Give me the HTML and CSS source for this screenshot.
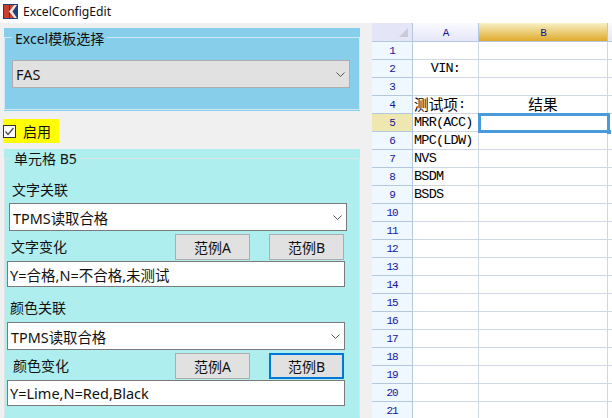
FILE: index.html
```html
<!DOCTYPE html>
<html>
<head>
	<meta charset="UTF-8">
	<title>ExcelConfigEdit</title>
	<link rel="stylesheet" href="styles.css">
</head>
<body>
	<div class="titlebar">
		<svg class="logo" width="15" height="15" viewBox="0 0 15 15">
			<rect width="15" height="15" fill="#1f3f80"/>
			<rect x="1" y="1" width="5" height="13" fill="#c8402c"/>
			<path d="M6 7.5 L11 1 H14 L9.5 7.5 L14 14 H11 Z" fill="#e9e4e0"/>
			<path d="M7 1 H11 L7 6 Z M7 14 H11 L7 9 Z" fill="#d2452e"/>
		</svg>
		<span>ExcelConfigEdit</span>
	</div>
	<div class="main">
		<div class="side">
			<div class="group group-template">
				<fieldset>
					<legend>Excel模板选择</legend>
					<div class="combo combo-flat">
						<span>FAS</span>
						<svg class="chevron" width="9" height="5" viewBox="0 0 9 5"><path d="M0.5 0.5 L4.5 4.5 L8.5 0.5" fill="none" stroke="#555"/></svg>
					</div>
				</fieldset>
			</div>
			<label class="enable">
				<svg width="13" height="13" viewBox="0 0 13 13">
					<rect x="0.5" y="0.5" width="12" height="12" fill="#fff" stroke="#333"/>
					<path d="M2.5 6.5 L5 9.5 L10.5 3" fill="none" stroke="#444" stroke-width="1.2"/>
				</svg>
				<span>启用</span>
			</label>
			<div class="group group-cell">
				<fieldset>
					<legend>单元格 B5</legend>
					<div class="field-title title-text">文字关联</div>
					<div class="combo combo-text">
						<span>TPMS读取合格</span>
						<svg class="chevron" width="9" height="5" viewBox="0 0 9 5"><path d="M0.5 0.5 L4.5 4.5 L8.5 0.5" fill="none" stroke="#555"/></svg>
					</div>
					<div class="example-row">
						<span class="field-title">文字变化</span>
						<button class="btn">范例A</button>
						<button class="btn">范例B</button>
					</div>
					<input class="textbox" type="text" value="Y=合格,N=不合格,未测试">
					<div class="field-title title-color">颜色关联</div>
					<div class="combo combo-color">
						<span>TPMS读取合格</span>
						<svg class="chevron" width="9" height="5" viewBox="0 0 9 5"><path d="M0.5 0.5 L4.5 4.5 L8.5 0.5" fill="none" stroke="#555"/></svg>
					</div>
					<div class="example-row">
						<span class="field-title shift">颜色变化</span>
						<button class="btn">范例A</button>
						<button class="btn btn-focus">范例B</button>
					</div>
					<input class="textbox" type="text" value="Y=Lime,N=Red,Black">
				</fieldset>
			</div>
		</div>
		<div class="sheet">
			<table>
				<tr class="head">
					<th class="corner"></th>
					<th class="col">A</th>
					<th class="col col-active">B</th>
					<th class="col"></th>
				</tr>
				<tr><th>1</th><td></td><td></td><td></td></tr>
				<tr><th>2</th><td class="center">VIN:</td><td></td><td></td></tr>
				<tr><th>3</th><td></td><td></td><td></td></tr>
				<tr><th>4</th><td class="han-row"><span class="han">测试项</span>:</td><td class="center han-row"><span class="han">结果</span></td><td></td></tr>
				<tr><th class="row-active">5</th><td>MRR(ACC)</td><td class="selected"></td><td></td></tr>
				<tr><th>6</th><td>MPC(LDW)</td><td></td><td></td></tr>
				<tr><th>7</th><td>NVS</td><td></td><td></td></tr>
				<tr><th>8</th><td>BSDM</td><td></td><td></td></tr>
				<tr><th>9</th><td>BSDS</td><td></td><td></td></tr>
				<tr><th>10</th><td></td><td></td><td></td></tr>
				<tr><th>11</th><td></td><td></td><td></td></tr>
				<tr><th>12</th><td></td><td></td><td></td></tr>
				<tr><th>13</th><td></td><td></td><td></td></tr>
				<tr><th>14</th><td></td><td></td><td></td></tr>
				<tr><th>15</th><td></td><td></td><td></td></tr>
				<tr><th>16</th><td></td><td></td><td></td></tr>
				<tr><th>17</th><td></td><td></td><td></td></tr>
				<tr><th>18</th><td></td><td></td><td></td></tr>
				<tr><th>19</th><td></td><td></td><td></td></tr>
				<tr><th>20</th><td></td><td></td><td></td></tr>
				<tr><th>21</th><td></td><td></td><td></td></tr>
			</table>
		</div>
	</div>
</body>
</html>
```
FILE: styles.css
```css
html, body {
	margin: 0;
	height: 100%;
	overflow: hidden;
}
body {
	background-color: #f0f0f0;
	font-family: "Noto Sans", "Noto Sans CJK SC", sans-serif;
	font-size: 14px;
	color: #111;
}
.titlebar {
	display: flex;
	align-items: center;
	gap: 5px;
	height: 23px;
	padding-left: 3px;
	background-color: #fff;
	font-size: 12.2px;
}
.main {
	display: flex;
	height: 395px;
}
.side {
	width: 356px;
	margin: 5px 12px 0 4px;
	flex: none;
}
.group {
	padding-top: 1px;
}
.group fieldset {
	margin: 0;
	padding: 0;
	min-width: 0;
	border: 1px solid;
}
.group legend {
	height: 16px;
	padding: 0 3px;
	line-height: 20px;
}
.group-template {
	height: 83px;
	box-sizing: border-box;
	padding-bottom: 1px;
	background-color: #87ceeb;
}
.group-template fieldset {
	height: 81px;
	box-sizing: border-box;
	border-color: #cfeaf6;
}
.group-template legend {
	margin-left: 7px;
}
.group-cell {
	height: 269px;
	box-sizing: border-box;
	background-color: #afeeee;
}
.group-cell fieldset {
	border-color: #d8e6e6;
	border-bottom-color: transparent;
	height: 268px;
	box-sizing: border-box;
}
.group-cell legend {
	margin-left: 6px;
	line-height: 18px;
}
.combo {
	display: flex;
	align-items: center;
	justify-content: space-between;
	box-sizing: border-box;
	height: 28px;
	padding: 0 4px 0 3px;
	border: 1px solid #7a7a7a;
	background-color: #fff;
	font-size: 14.4px;
}
.combo-flat {
	margin: 15px 9px 0 7px;
	border: 1px solid #adadad;
	background-color: #e1e1e1;
}
.combo-text {
	margin: 4px 12px 0 4px;
}
.combo-color {
	margin: 5px 14px 0 2px;
}
.chevron {
	flex: none;
}
.field-title {
	line-height: 18px;
}
.title-text {
	margin: 15px 0 0 7px;
}
.title-color {
	margin: 12px 0 0 5px;
}
.example-row {
	display: flex;
	align-items: center;
	height: 26px;
	margin: 3px 0 1px 6px;
}
.example-row .field-title {
	flex: none;
	width: 164px;
}
.example-row .shift {
	padding-left: 2px;
	width: 162px;
}
.btn {
	flex: none;
	box-sizing: border-box;
	width: 75px;
	height: 26px;
	margin-right: 19px;
	padding: 0;
	border: 1px solid #adadad;
	background-color: #e1e1e1;
	font: inherit;
	color: #111;
}
.btn-focus {
	border: 2px solid #0078d7;
}
.textbox {
	display: block;
	box-sizing: border-box;
	width: 338px;
	height: 26px;
	margin-left: 2px;
	padding: 0 2px;
	border: 1px solid #7a7a7a;
	background-color: #fff;
	font: inherit;
	font-size: 14.5px;
	color: #111;
	outline: none;
}
.sheet {
	flex: 1;
	overflow: hidden;
	background-color: #fff;
}
.sheet table {
	table-layout: fixed;
	width: 240px;
	border-collapse: separate;
	border-spacing: 0;
}
.sheet th, .sheet td {
	box-sizing: border-box;
	height: 18px;
	padding: 1px 0 0;
	white-space: nowrap;
	border-right: 1px solid #d0d7e5;
	border-bottom: 1px solid #d0d7e5;
	line-height: 16px;
}
.sheet .head th {
	height: 19px;
}
.sheet th {
	width: 41px;
	background-color: #eff7ff;
	border-right-color: #b5c7de;
	border-bottom-color: #b5c7de;
	font: normal 11px/16px "Liberation Mono", monospace;
	letter-spacing: -1px;
	color: #15159a;
}
.sheet .corner {
	position: relative;
	background-color: #e4e5f7;
}
.sheet .corner::after {
	content: "";
	position: absolute;
	right: 4px;
	bottom: 4px;
	border-left: 9px solid transparent;
	border-bottom: 9px solid #c9cad6;
}
.sheet .col {
	background: linear-gradient(#fafaff, #e6e7f8);
	width: 66px;
}
.sheet .col-active {
	background: linear-gradient(#f8f1c4, #e0a92b);
	width: 129px;
}
.sheet .row-active {
	background-color: #eee7af;
}
.sheet td {
	padding-left: 1px;
	font: 13.5px/16px "Liberation Mono", monospace;
	letter-spacing: -0.78px;
	color: #000;
}
.sheet .center {
	text-align: center;
	padding-left: 0;
}
.sheet .han-row {
	padding-top: 0;
}
.han {
	display: inline-block;
	height: 16px;
	line-height: 14px;
	vertical-align: top;
	letter-spacing: 0;
	font-family: "Noto Sans CJK SC", sans-serif;
	font-size: 14.67px;
}
.sheet .selected {
	position: relative;
}
.sheet .selected::before {
	content: "";
	position: absolute;
	top: -1px;
	right: -3px;
	bottom: -2px;
	left: -1px;
	border: 3px solid #4a9bdc;
}
.sheet .selected::after {
	content: "";
	position: absolute;
	right: -4px;
	bottom: -3px;
	width: 4px;
	height: 4px;
	background-color: #4a9bdc;
}
.enable {
	display: flex;
	align-items: center;
	gap: 7px;
	box-sizing: border-box;
	width: 56px;
	height: 24px;
	margin: 8px 0 6px -1px;
	background-color: #ffff00;
}
```
